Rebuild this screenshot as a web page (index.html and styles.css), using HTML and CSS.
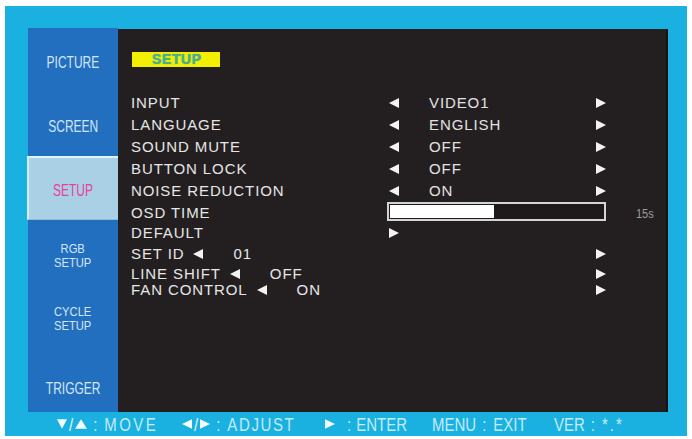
FILE: index.html
```html
<!DOCTYPE html>
<html>
<head>
<meta charset="utf-8">
<link rel="stylesheet" href="styles.css">
</head>
<body>
<div class="frame">
  <div class="screen">
    <nav class="side">
      <div class="tab t1"><span class="nt">PICTURE</span></div>
      <div class="tab t2"><span class="nt">SCREEN</span></div>
      <div class="tab sel"><span class="nt">SETUP</span></div>
      <div class="tab two t4"><span class="nt">RGB<br>SETUP</span></div>
      <div class="tab two t5"><span class="nt">CYCLE<br>SETUP</span></div>
      <div class="tab t6"><span class="nt">TRIGGER</span></div>
    </nav>
    <main class="panel">
      <div class="title">SETUP</div>
      <div class="rows">
        <div class="row"><span class="lab">INPUT</span><span class="tl"></span><span class="val">VIDEO1</span><span class="tr"></span></div>
        <div class="row"><span class="lab">LANGUAGE</span><span class="tl"></span><span class="val">ENGLISH</span><span class="tr"></span></div>
        <div class="row"><span class="lab">SOUND MUTE</span><span class="tl"></span><span class="val">OFF</span><span class="tr"></span></div>
        <div class="row"><span class="lab">BUTTON LOCK</span><span class="tl"></span><span class="val">OFF</span><span class="tr"></span></div>
        <div class="row"><span class="lab">NOISE REDUCTION</span><span class="tl"></span><span class="val">ON</span><span class="tr"></span></div>
        <div class="row"><span class="lab">OSD TIME</span><span class="bar"><span class="fill"></span></span><span class="secs">15s</span></div>
        <div class="row r-def"><span class="lab">DEFAULT</span><span class="tr"></span></div>
        <div class="row r-id"><span class="wide">SET ID<span class="tl in"></span><span class="inval">01</span></span><span class="tr"></span></div>
        <div class="row r-ls"><span class="wide">LINE SHIFT<span class="tl in"></span><span class="inval">OFF</span></span><span class="tr"></span></div>
        <div class="row r-fan"><span class="wide">FAN CONTROL<span class="tl in"></span><span class="inval">ON</span></span><span class="tr"></span></div>
      </div>
    </main>
  </div>
  <footer class="foot">
    <span class="g g1"><span class="fd"></span><span class="sl">/</span><span class="fu"></span><span class="sep">:</span><span class="w spaced">MOVE</span></span>
    <span class="g g2"><span class="fl"></span><span class="sl">/</span><span class="fr"></span><span class="sep">:</span><span class="w spaced2">ADJUST</span></span>
    <span class="g g3"><span class="fr"></span><span class="sep s3">:</span><span class="w">ENTER</span></span>
    <span class="g g4"><span class="w">MENU</span><span class="sep">:</span><span class="w">EXIT</span></span>
    <span class="g g5"><span class="w">VER</span><span class="sep">:</span><span class="w stars">*.*</span></span>
  </footer>
</div>
</body>
</html>
```
FILE: styles.css
```css
body {
  margin: 0;
  background: #ffffff;
}

.frame {
  margin: 6px 0 0 5px;
  width: 682px;
  height: 430px;
  background: #1ab1e0;
  box-sizing: border-box;
  padding: 22px 19px 0 23px;
  display: flex;
  flex-direction: column;
}

.screen {
  display: flex;
  height: 384px;
}

.side {
  width: 90px;
  background: #236fbf;
  display: grid;
  grid-template-rows: repeat(6, 64px);
  font-family: "Liberation Sans", Arial, sans-serif;
  font-size: 15px;
  color: #d4e6f6;
}

.tab {
  display: flex;
  align-items: center;
  justify-content: center;
  text-align: center;
  padding-top: 4px;
  box-sizing: border-box;
}

.nt {
  display: inline-block;
  transform: scaleX(0.8) scaleY(1.05);
  white-space: nowrap;
}

.tab.two {
  font-size: 13px;
  line-height: 14px;
}

.tab.two .nt {
  transform: scaleX(0.86);
}

.t4 { padding-top: 8px; }
.t5 { padding-top: 6px; }
.t6 { padding-top: 16px; }

.sel {
  background: #a9d0e4;
  color: #e8409a;
  border-top: 2px solid #e2f2fa;
  border-left: 2px solid #d6ecf6;
  border-bottom: 1px solid #8fbcd6;
  margin-left: -1px;
}

.panel {
  width: 550px;
  margin-top: 1px;
  background: #231f20;
  box-sizing: border-box;
  padding-left: 13px;
  border-right: 2px solid #151112;
  font-family: "Liberation Sans", Arial, sans-serif;
  font-size: 15px;
  letter-spacing: 0.9px;
  color: #e6e6e6;
}

.title {
  margin-top: 23px;
  margin-left: 1px;
  width: 88px;
  height: 15px;
  box-sizing: border-box;
  padding-left: 20px;
  background: #f3ef00;
  font-weight: bold;
  font-size: 14px;
  line-height: 15px;
  letter-spacing: 0.6px;
  color: #48b089;
  text-shadow: 0 0 1px #2c9fd2;
}

.rows {
  margin-top: 25px;
}

.row {
  display: flex;
  align-items: center;
  height: 22px;
  line-height: 22px;
}

.r-def { height: 18px; line-height: 18px; }
.r-id { height: 23px; line-height: 23px; }
.r-ls { height: 17px; line-height: 17px; }
.r-fan { height: 15px; line-height: 15px; }

.lab {
  width: 258px;
  flex: none;
}

.wide {
  width: 465px;
  flex: none;
  display: flex;
  align-items: center;
}

.val {
  width: 197px;
  flex: none;
  box-sizing: border-box;
  padding-left: 30px;
  color: #e2e2e2;
}

.tl {
  flex: none;
  width: 0;
  height: 0;
  border-right: 10px solid #f2f2f2;
  border-top: 5px solid transparent;
  border-bottom: 5px solid transparent;
}

.tr {
  flex: none;
  width: 0;
  height: 0;
  border-left: 10px solid #f2f2f2;
  border-top: 5px solid transparent;
  border-bottom: 5px solid transparent;
}

.tl.in {
  margin-left: 9px;
}

.inval {
  margin-left: 30px;
}

.bar {
  flex: none;
  margin-left: -2px;
  width: 219px;
  height: 19px;
  margin-top: -3px;
  box-sizing: border-box;
  border: 2px solid #d4d4d4;
  background: #1e1a1b;
  padding: 1px 0 1px 1px;
}

.fill {
  display: block;
  width: 104px;
  height: 100%;
  background: #ffffff;
}

.secs {
  margin-left: 30px;
  font-size: 11px;
  letter-spacing: 0;
  color: #9c9c9c;
  display: inline-block;
  transform: scaleY(1.15);
}

.foot {
  height: 24px;
  display: flex;
  align-items: center;
  padding-left: 29px;
  font-family: "Liberation Sans", Arial, sans-serif;
  font-size: 15px;
  color: #c3ebfa;
  transform: scaleY(1.2);
}

.g {
  display: flex;
  align-items: center;
  flex: none;
}

.g1 { width: 125px; }
.g2 { width: 143px; }
.g3 { width: 107px; }
.g4 { width: 122px; }

.sl {
  margin: 0 2px;
  color: #e4f6fd;
}

.sep {
  margin: 0 7px 0 6px;
}

.s3 {
  margin-left: 12px;
  margin-right: 5px;
}

.spaced { letter-spacing: 2.4px; }
.spaced2 { letter-spacing: 1.6px; }

.stars {
  letter-spacing: 2px;
}

.fd {
  width: 0;
  height: 0;
  border-top: 8px solid #f2fbff;
  border-left: 5px solid transparent;
  border-right: 5px solid transparent;
}

.fu {
  width: 0;
  height: 0;
  border-bottom: 8px solid #f2fbff;
  border-left: 6px solid transparent;
  border-right: 6px solid transparent;
}

.fl {
  width: 0;
  height: 0;
  border-right: 10px solid #f2fbff;
  border-top: 4px solid transparent;
  border-bottom: 4px solid transparent;
}

.fr {
  width: 0;
  height: 0;
  border-left: 10px solid #f2fbff;
  border-top: 4px solid transparent;
  border-bottom: 4px solid transparent;
}
```
